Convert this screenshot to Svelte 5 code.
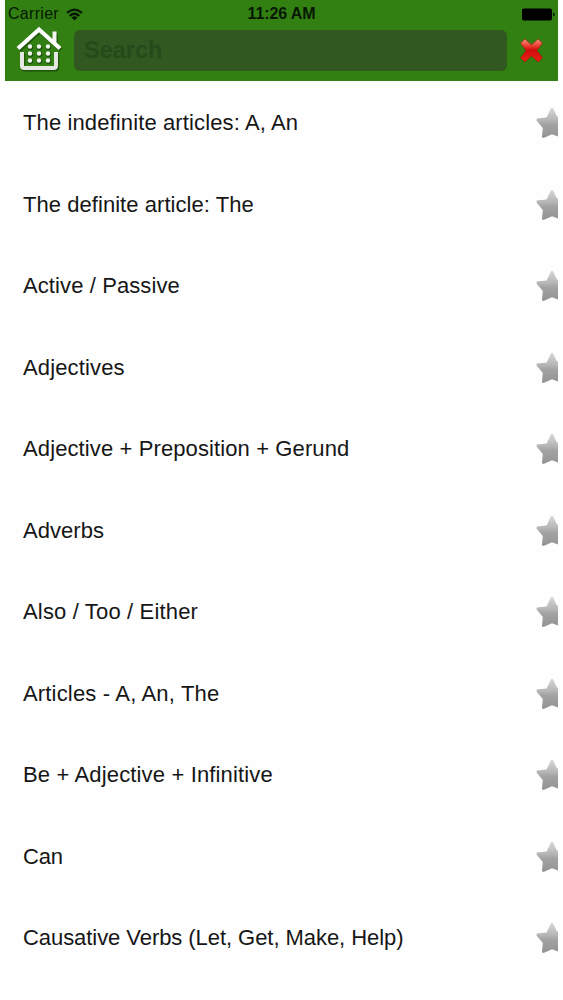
<script>
  const topics = [
    { title: 'The indefinite articles: A, An', spacing: 0.12 },
    { title: 'The definite article: The', spacing: 0.05 },
    { title: 'Active / Passive', spacing: 0.1 },
    { title: 'Adjectives', spacing: 0.14 },
    { title: 'Adjective + Preposition + Gerund', spacing: 0.11 },
    { title: 'Adverbs', spacing: 0.04 },
    { title: 'Also / Too / Either', spacing: 0.16 },
    { title: 'Articles - A, An, The', spacing: 0.17 },
    { title: 'Be + Adjective + Infinitive', spacing: 0.15 },
    { title: 'Can', spacing: -0.15 },
    { title: 'Causative Verbs (Let, Get, Make, Help)', spacing: -0.06 }
  ];
  const dots = [29.5, 36.5, 43.5].flatMap((y) => [30, 39, 48].map((x) => ({ x, y })));
</script>

<div class="screen">
  <header>
    <div class="status">
      <div class="carrier">
        <span>Carrier</span>
        <svg width="17" height="13" viewBox="0 0 17 13" fill="none" stroke="#061803" stroke-width="2.2">
          <path d="M1 4.8Q8.5-1.6 16 4.8M3.7 7.9Q8.5 3.6 13.3 7.9" />
          <path d="M5.5 9.5Q8.5 6.9 11.5 9.5L8.5 12.6Z" fill="#061803" stroke="none" />
        </svg>
      </div>
      <span class="time">11:26 AM</span>
      <svg class="battery" width="33" height="13" viewBox="0 0 33 13">
        <rect x="0" y="0.4" width="30" height="12.2" rx="1.8" fill="#000" />
        <path d="M31 4.5q1.8.4 1.8 2t-1.8 2z" fill="#061803" />
      </svg>
    </div>
    <div class="bar">
      <button aria-label="Home">
        <svg width="48" height="50" viewBox="15 8 48 50" fill="none">
          <g stroke="#173f09" stroke-opacity=".65" stroke-width="4.4" transform="translate(1 1.4)">
            <path d="M18 31.5 39 12.5 60 31.5M54.5 25V15.5M22 35V48.5Q22 51 24.5 51H53.5Q56 51 56 48.5V35" />
          </g>
          <path d="M22 35V48.5Q22 51 24.5 51H53.5Q56 51 56 48.5V35" stroke="#e5e7e3" stroke-width="4" />
          <path d="M54.5 27V14.5" stroke="#f5f6f4" stroke-width="4" />
          <path d="M18 31.5 39 12.5 60 31.5" stroke="#fff" stroke-width="4.2" />
          {#each dots as d}
            <circle cx={d.x + 0.5} cy={d.y + 0.8} r="2.7" fill="#1d4b0d" />
            <circle cx={d.x} cy={d.y} r="2.2" fill="#eef5ec" />
          {/each}
        </svg>
      </button>
      <div class="search">Search</div>
      <button aria-label="Clear">
        <svg width="25" height="25" viewBox="0 0 24 25">
          <defs>
            <linearGradient id="red" x1="0" y1="0" x2="0" y2="1">
              <stop offset="0" stop-color="#f79480" />
              <stop offset=".32" stop-color="#e8382b" />
              <stop offset=".48" stop-color="#cf0e0c" />
              <stop offset="1" stop-color="#e92018" />
            </linearGradient>
          </defs>
          <path d="M5.4 1 12 6.8 18.6 1 23 5.2 17.4 12.4 23 19.8 18.6 24 12 18 5.4 24 1 19.8 6.6 12.4 1 5.2Z" fill="url(#red)" stroke="#9b160c" stroke-width=".6" stroke-linejoin="round" />
        </svg>
      </button>
    </div>
  </header>
  <ul>
    {#each topics as topic}
      <li>
        <span style="letter-spacing: {topic.spacing}px">{topic.title}</span>
        <svg width="22" height="32" viewBox="0 0 22 32">
          <defs>
            <linearGradient id="silver" x1="0" y1="0" x2="0" y2="1">
              <stop offset="0" stop-color="#d8d8d8" />
              <stop offset=".4" stop-color="#b7b6b7" />
              <stop offset=".56" stop-color="#a3a2a3" />
              <stop offset="1" stop-color="#949394" />
            </linearGradient>
          </defs>
          <path d="M14.8 1.4Q16 .2 17.2 1.4L20.4 8.6Q20.8 9.6 22 9.8V29.6L16 27.2 7.6 31 5.9 30.2 6.8 21 .5 13.6.8 11.6 10.6 10.5Z" fill="url(#silver)" />
        </svg>
      </li>
    {/each}
  </ul>
</div>

<style>
  :global(body) {
    margin: 0;
    background: #fff;
  }
  .screen {
    box-sizing: border-box;
    width: 563px;
    height: 1000px;
    padding: 0 5px;
    overflow: hidden;
    background: #fefefe;
    font-family: "Liberation Sans", Arial, sans-serif;
  }
  header {
    height: 81px;
    background: #327f12;
  }
  .status {
    display: grid;
    grid-template-columns: 1fr auto 1fr;
    align-items: center;
    height: 28px;
    padding: 0 3px;
    color: #061803;
    font-size: 16px;
  }
  .carrier {
    display: flex;
    align-items: center;
    gap: 7px;
    letter-spacing: 0.3px;
  }
  .time {
    font-weight: 700;
    letter-spacing: -0.1px;
  }
  .battery {
    justify-self: end;
  }
  .bar {
    display: flex;
    align-items: center;
    height: 44px;
    padding-left: 10px;
  }
  button {
    display: flex;
    padding: 0;
    border: 0;
    background: none;
  }
  .search {
    box-sizing: border-box;
    width: 433px;
    height: 41px;
    margin: 0 12px 0 11px;
    padding-left: 10px;
    border-radius: 6px;
    background: #315821;
    color: #264a1a;
    font-size: 23.5px;
    font-weight: 700;
    line-height: 41px;
  }
  ul {
    margin: 0;
    padding: 1.4px 0 0;
    list-style: none;
  }
  li {
    display: flex;
    align-items: center;
    justify-content: space-between;
    height: 81.5px;
    padding-left: 18px;
    color: #161616;
    font-size: 22px;
    white-space: nowrap;
  }
</style>
